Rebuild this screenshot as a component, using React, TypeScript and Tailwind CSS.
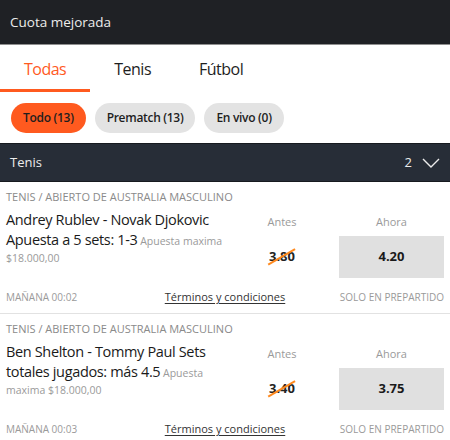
import React from "react";

type Offer = {
  category: string;
  title: string;
  maxBet: string;
  before: string;
  now: string;
  time: string;
};

const OFFERS: Offer[] = [
  {
    category: "TENIS / ABIERTO DE AUSTRALIA MASCULINO",
    title: "Andrey Rublev - Novak Djokovic Apuesta a 5 sets: 1-3",
    maxBet: "Apuesta maxima $18.000,00",
    before: "3.80",
    now: "4.20",
    time: "MAÑANA 00:02",
  },
  {
    category: "TENIS / ABIERTO DE AUSTRALIA MASCULINO",
    title: "Ben Shelton - Tommy Paul Sets totales jugados: más 4.5",
    maxBet: "Apuesta maxima $18.000,00",
    before: "3.40",
    now: "3.75",
    time: "MAÑANA 00:03",
  },
];

const TABS = ["Todas", "Tenis", "Fútbol"];
const FILTERS = ["Todo (13)", "Prematch (13)", "En vivo (0)"];

function OfferCard({ offer }: { offer: Offer }) {
  return (
    <div className="border-b border-[#e2e2e2] px-[6px] pt-[8px] pb-[8px]">
      <div className="text-[11px] leading-[14px] text-[#8a8a8a]">{offer.category}</div>
      <div className="mt-[6px] flex">
        <div className="w-[226px] text-[10.5px] leading-[16px] text-[#9a9a9a]">
          <span className="text-[14.5px] leading-[20px] tracking-[-0.35px] text-[#1a1a1a]">
            {offer.title}
          </span>{" "}
          {offer.maxBet}
        </div>
        <div className="ml-auto flex gap-[7px] pt-[5px]">
          <div className="flex w-[100px] flex-col items-center">
            <span className="text-[11px] leading-[14px] text-[#9a9a9a]">Antes</span>
            <div className="mt-[7px] flex h-[42px] items-center">
              <span className="relative text-[13px] font-bold text-[#222]">
                {offer.before}
                <span className="absolute left-[-3px] top-[9px] h-[1.5px] w-[31px] -rotate-[30deg] bg-[#ff8a1f]" />
              </span>
            </div>
          </div>
          <div className="flex w-[105px] flex-col items-center">
            <span className="text-[11px] leading-[14px] text-[#9a9a9a]">Ahora</span>
            <div className="mt-[7px] flex h-[42px] w-full items-center justify-center bg-[#e0e0e0] text-[13px] font-bold text-[#1a1a1a]">
              {offer.now}
            </div>
          </div>
        </div>
      </div>
      <div className="mt-[11px] flex items-center justify-between leading-[16px]">
        <span className="w-[140px] text-[10px] text-[#9a9a9a]">{offer.time}</span>
        <span className="text-[11px] text-[#333] underline underline-offset-2">Términos y condiciones</span>
        <span className="w-[140px] text-right text-[10px] text-[#9a9a9a]">SOLO EN PREPARTIDO</span>
      </div>
    </div>
  );
}

export default function App() {
  return (
    <div className="h-[440px] w-[450px] overflow-hidden bg-white font-['Open_Sans',sans-serif]">
      <div className="flex h-[45px] items-center border-b border-[#8f8f8f] bg-[#1f2125] px-[10px] text-[13.5px] text-[#ececec]">
        Cuota mejorada
      </div>

      <div className="flex h-[47px]">
        {TABS.map((t, i) => (
          <div
            key={t}
            className={
              i === 0
                ? "flex items-center border-b-[3px] border-[#ff5a1f] px-6 pt-[3px] text-[16px] tracking-[-0.5px] text-[#ff5a1f]"
                : "flex items-center px-6 text-[16px] tracking-[-0.5px] text-[#1e1e1e]"
            }
          >
            {t}
          </div>
        ))}
      </div>

      <div className="mt-[11px] flex gap-[9px] px-[11px]">
        {FILTERS.map((f, i) => (
          <div
            key={f}
            className={
              i === 0
                ? "flex h-[30px] items-center rounded-full bg-[#ff5a1f] px-[12px] text-[12px] font-semibold tracking-[-0.3px] text-[#1e1e1e]"
                : "flex h-[30px] items-center rounded-full bg-[#e3e3e3] px-[12px] text-[12px] font-semibold tracking-[-0.3px] text-[#1e1e1e]"
            }
          >
            {f}
          </div>
        ))}
      </div>

      <div className="mt-[10px] flex h-[39px] items-center border-y border-[#171a1f] bg-[#272d37] pl-[10px] pr-[10px] text-[13px] text-[#ececec]">
        <span>Tenis</span>
        <span className="ml-auto">2</span>
        <svg className="ml-[10px]" width="18" height="10" viewBox="0 0 18 10" fill="none">
          <path d="M1 1l8 8 8-8" stroke="#ececec" strokeWidth="1.4" />
        </svg>
      </div>

      {OFFERS.map((o) => (
        <OfferCard key={o.time} offer={o} />
      ))}
    </div>
  );
}
